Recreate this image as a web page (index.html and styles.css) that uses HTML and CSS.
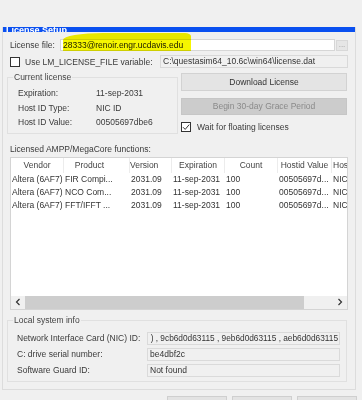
FILE: index.html
```html
<!DOCTYPE html>
<html>
<head>
<meta charset="utf-8">
<link rel="stylesheet" href="styles.css">
</head>
<body>
<div class="top"></div>
<div class="panel">
  <div class="title"><span>License Setup</span></div>
  <div class="content">
    <div class="row r1">
      <span class="lbl l1">License file:</span>
      <div class="input"><span class="txt">28333@renoir.engr.ucdavis.edu</span></div>
      <div class="dots">...</div>
      <div class="hl"></div>
    </div>
    <div class="row r2">
      <span class="cb"></span>
      <span class="lbl l2">Use LM_LICENSE_FILE variable:</span>
      <div class="input dis">C:\questasim64_10.6c\win64\license.dat</div>
    </div>
    <div class="mid">
      <div class="group cur">
        <span class="legend">Current license</span>
        <div class="kv"><span class="k">Expiration:</span><span>11-sep-2031</span></div>
        <div class="kv"><span class="k">Host ID Type:</span><span>NIC ID</span></div>
        <div class="kv"><span class="k">Host ID Value:</span><span>00505697dbe6</span></div>
      </div>
      <div class="actions">
        <div class="btn">Download License</div>
        <div class="btn off">Begin 30-day Grace Period</div>
        <div class="chk"><span class="cb on"><svg viewBox="0 0 10 10" width="10" height="10"><path d="M2 5.2 L4.2 7.4 L8.2 2.6" fill="none" stroke="#333" stroke-width="1"/></svg></span><span>Wait for floating licenses</span></div>
      </div>
    </div>
    <div class="tlabel">Licensed AMPP/MegaCore functions:</div>
    <div class="table">
      <div class="thead">
        <div class="c c1">Vendor</div><div class="c c2">Product</div><div class="c c3">Version</div><div class="c c4">Expiration</div><div class="c c5">Count</div><div class="c c6">Hostid Value</div><div class="c c7">Hos</div>
      </div>
      <div class="tbody">
        <div class="tr"><div class="c c1">Altera (6AF7)</div><div class="c c2">FIR Compi...</div><div class="c c3">2031.09</div><div class="c c4">11-sep-2031</div><div class="c c5">100</div><div class="c c6">00505697d...</div><div class="c c7">NIC</div></div>
        <div class="tr"><div class="c c1">Altera (6AF7)</div><div class="c c2">NCO Com...</div><div class="c c3">2031.09</div><div class="c c4">11-sep-2031</div><div class="c c5">100</div><div class="c c6">00505697d...</div><div class="c c7">NIC</div></div>
        <div class="tr"><div class="c c1">Altera (6AF7)</div><div class="c c2">FFT/IFFT ...</div><div class="c c3">2031.09</div><div class="c c4">11-sep-2031</div><div class="c c5">100</div><div class="c c6">00505697d...</div><div class="c c7">NIC</div></div>
      </div>
      <div class="hscroll">
        <div class="arr"><svg viewBox="0 0 6 8" width="6" height="8"><path d="M4.5 1 L1.5 4 L4.5 7" fill="none" stroke="#333" stroke-width="1.2"/></svg></div>
        <div class="thumb"></div>
        <div class="track"></div>
        <div class="arr"><svg viewBox="0 0 6 8" width="6" height="8"><path d="M1.5 1 L4.5 4 L1.5 7" fill="none" stroke="#333" stroke-width="1.2"/></svg></div>
      </div>
    </div>
    <div class="group local">
      <span class="legend">Local system info</span>
      <div class="frow"><span class="fk">Network Interface Card (NIC) ID:</span><div class="field nic"><span>) , 9cb6d0d63115 , 9eb6d0d63115 , aeb6d0d63115</span></div></div>
      <div class="frow"><span class="fk">C: drive serial number:</span><div class="field">be4dbf2c</div></div>
      <div class="frow"><span class="fk">Software Guard ID:</span><div class="field">Not found</div></div>
    </div>
  </div>
</div>
<div class="buttons">
  <div class="bbtn">OK</div>
  <div class="bbtn">Cancel</div>
  <div class="bbtn">Help</div>
</div>
</body>
</html>
```

FILE: styles.css
```css
html, body {
  margin: 0;
  padding: 0;
}
body {
  background: #f0f0f0;
  font-family: "Liberation Sans", Arial, sans-serif;
  font-size: 8.5px;
  color: #3a3a3a;
  width: 362px;
  height: 400px;
  overflow: hidden;
}
.top {
  height: 27px;
}
.panel {
  margin-left: 2px;
  width: 352px;
  border-left: 1px solid #dcdcdc;
  border-right: 1px solid #dcdcdc;
  border-bottom: 1px solid #dcdcdc;
}
.title {
  height: 5px;
  background: #0a50f0;
  overflow: hidden;
  color: #ffffff;
  font-weight: bold;
  font-size: 9px;
  line-height: 5px;
  padding-left: 3px;
}
.title span {
  display: block;
  line-height: 6px;
}
.content {
  padding: 0 7px 7px 7px;
}
.row {
  display: flex;
  align-items: center;
  position: relative;
}
.r1 {
  margin-top: 7px;
  height: 12px;
}
.l1 {
  width: 50px;
  flex: none;
}
.input {
  flex: 1;
  height: 12px;
  box-sizing: border-box;
  border: 1px solid #d6d6d6;
  background: #ffffff;
  color: #222;
  line-height: 10px;
  padding-left: 2px;
  white-space: nowrap;
  overflow: hidden;
}
.r1 .input {
  position: relative;
  z-index: 1;
}
.dots {
  width: 12px;
  height: 11px;
  margin-left: 1px;
  box-sizing: border-box;
  border: 1px solid #d8d8d8;
  background: #e6e6e6;
  color: #999;
  text-align: center;
  line-height: 7px;
  font-size: 8px;
}
.hl {
  position: absolute;
  left: 53px;
  top: -6px;
  width: 128px;
  height: 18px;
  background: #f6f600;
  border-top-left-radius: 40px 7px;
  border-top-right-radius: 6px 3px;
  mix-blend-mode: multiply;
  z-index: 2;
}
.r2 {
  margin-top: 4px;
  height: 13px;
}
.cb {
  width: 10px;
  height: 10px;
  box-sizing: border-box;
  border: 1px solid #333;
  background: #fff;
  flex: none;
  display: inline-block;
  position: relative;
}
.cb svg {
  position: absolute;
  left: -1px;
  top: -1px;
}
.l2 {
  margin-left: 5px;
  width: 135px;
  flex: none;
}
.input.dis {
  height: 13px;
  background: #f0f0f0;
  border-color: #d9d9d9;
  line-height: 11px;
  color: #333;
}
.mid {
  display: flex;
  margin-top: 5px;
  gap: 3px;
}
.group {
  position: relative;
  border: 1px solid #e0e0e0;
  box-sizing: border-box;
  margin-left: -3px;
}
.legend {
  position: absolute;
  top: -6px;
  left: 5px;
  background: #f0f0f0;
  line-height: 11px;
  padding: 0 1px;
  color: #444;
}
.cur {
  width: 171px;
  margin-top: 4px;
  padding: 8px 0 3px 10px;
}
.kv {
  display: flex;
  height: 14.5px;
  line-height: 14.5px;
}
.k {
  width: 78px;
}
.actions {
  width: 166px;
  display: flex;
  flex-direction: column;
}
.btn {
  height: 18px;
  box-sizing: border-box;
  border: 1px solid #d2d2d2;
  background: #e4e4e4;
  text-align: center;
  line-height: 16px;
  color: #333;
}
.btn.off {
  margin-top: 7px;
  height: 17px;
  line-height: 15px;
  background: #cccccc;
  border-color: #c6c6c6;
  color: #8a8a8a;
}
.chk {
  margin-top: 7px;
  display: flex;
  align-items: center;
  height: 10px;
  gap: 6px;
}
.tlabel {
  margin-top: 9px;
  height: 12px;
  line-height: 12px;
}
.table {
  margin-top: 2px;
  height: 153px;
  box-sizing: border-box;
  border: 1px solid #d4d4d4;
  background: #ffffff;
  display: flex;
  flex-direction: column;
  overflow: hidden;
}
.thead, .tr {
  display: flex;
  white-space: nowrap;
}
.thead {
  height: 15px;
  line-height: 15px;
  color: #444;
}
.thead .c {
  text-align: center;
  border-right: 1px solid #ececec;
  box-sizing: border-box;
}
.thead .c7 {
  border-right: none;
  text-align: left;
  padding-left: 1px;
}
.tr {
  height: 13px;
  line-height: 13px;
  color: #333;
}
.tr .c {
  padding-left: 1px;
  box-sizing: border-box;
}
.c {
  overflow: hidden;
  flex: none;
}
.c1 { width: 53px; }
.c2 { width: 66px; }
.c3 { width: 42px; }
.c4 { width: 53px; }
.c5 { width: 53px; }
.c6 { width: 54px; }
.c7 { width: 30px; }
.thead .c2 { padding-right: 14px; }
.thead .c3 { padding-right: 14px; }
.tbody {
  flex: 1;
}
.hscroll {
  height: 13px;
  display: flex;
  background: #f0f0f0;
}
.arr {
  width: 14px;
  display: flex;
  align-items: center;
  justify-content: center;
}
.thumb {
  width: 279px;
  background: #cdcdcd;
}
.track {
  flex: 1;
}
.local {
  margin-top: 10px;
  width: 340px;
  padding: 11px 6px 4px 9px;
}
.frow {
  display: flex;
  align-items: center;
  height: 13px;
}
.frow + .frow {
  margin-top: 3px;
}
.fk {
  width: 130px;
  flex: none;
  white-space: nowrap;
}
.field {
  flex: 1;
  min-width: 0;
  height: 13px;
  box-sizing: border-box;
  border: 1px solid #dadada;
  line-height: 11px;
  padding-left: 2px;
  color: #333;
  white-space: nowrap;
  overflow: hidden;
}
.field.nic {
  padding-left: 0;
  padding-right: 1px;
  text-align: right;
  font-size: 8.3px;
}
.buttons {
  display: flex;
  gap: 5px;
  margin-top: 6px;
  padding-left: 167px;
}
.bbtn {
  width: 60px;
  height: 20px;
  box-sizing: border-box;
  border: 1px solid #cfcfcf;
  background: #e3e3e3;
  text-align: center;
  line-height: 18px;
  color: #333;
}
```
